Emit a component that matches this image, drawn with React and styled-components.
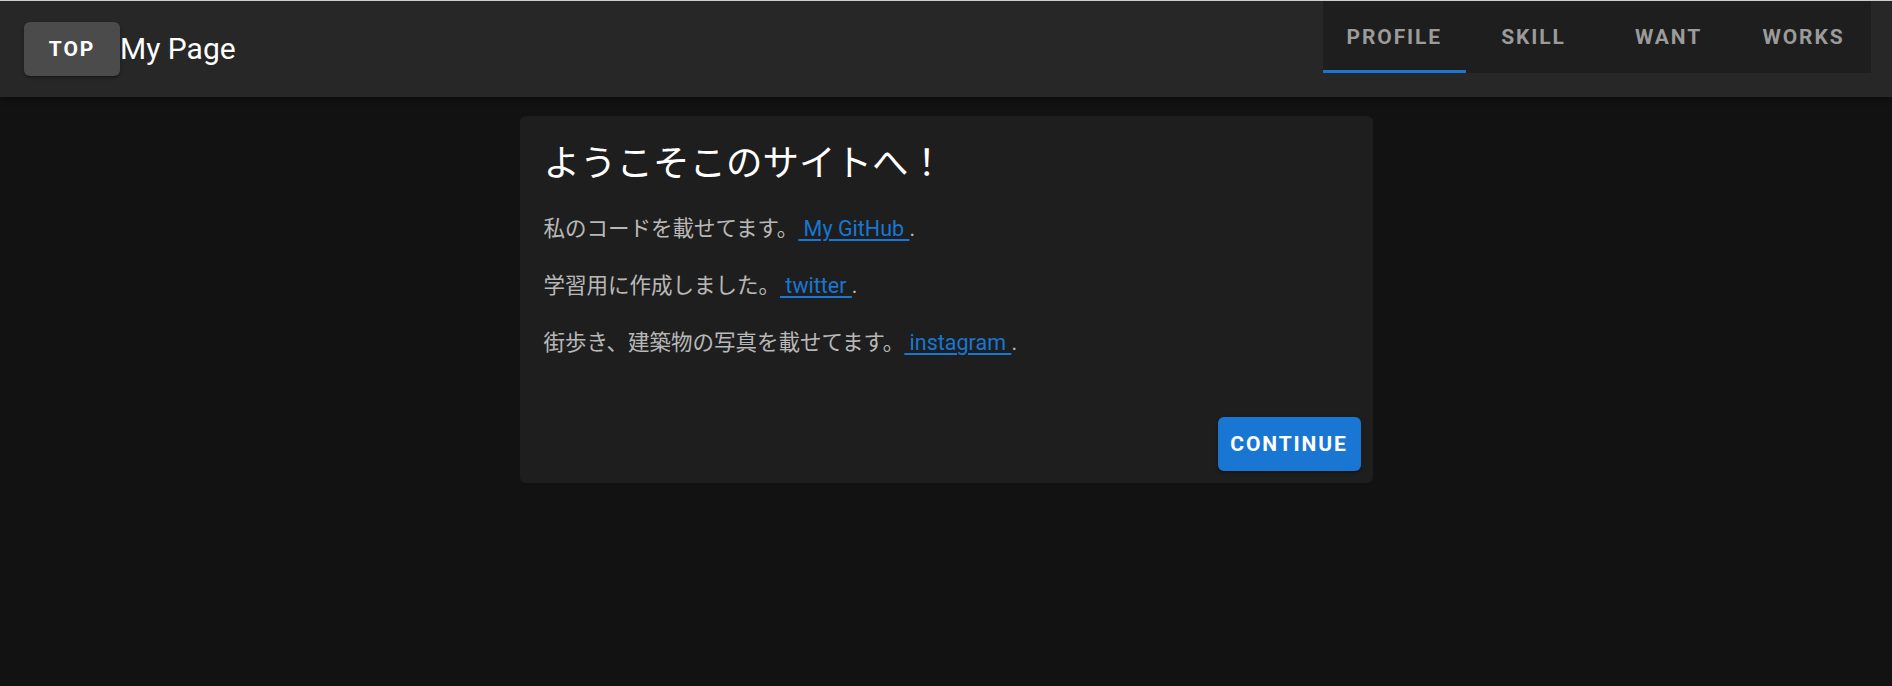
import React, { useState } from "react";
import styled, { createGlobalStyle } from "styled-components";

const GlobalStyle = createGlobalStyle`
    body {
        margin: 0;
        background-color: #121212;
        font-family: "Roboto", "Noto Sans CJK JP", sans-serif;
        color: #ffffff;
    }
`;

const Header = styled.header`
    display: flex;
    align-items: center;
    height: 96px;
    padding: 0 21px 0 24px;
    background-color: #272727;
    border-top: 1px solid #cfcfcf;
    box-shadow: 0 2px 4px -1px rgba(0, 0, 0, 0.2), 0 4px 5px 0 rgba(0, 0, 0, 0.14);
    position: relative;
    z-index: 1;
`;

const Brand = styled.div`
    display: flex;
    align-items: center;
    flex: 1;
`;

const TopButton = styled.button`
    min-width: 96px;
    height: 54px;
    padding: 0 24px;
    border: none;
    border-radius: 6px;
    background-color: #4b4b4b;
    color: #ffffff;
    font-family: "Roboto", sans-serif;
    font-size: 21px;
    font-weight: 700;
    letter-spacing: 1.875px;
    text-transform: uppercase;
    box-shadow: 0 3px 1px -2px rgba(0, 0, 0, 0.2), 0 2px 2px 0 rgba(0, 0, 0, 0.14), 0 1px 5px 0 rgba(0, 0, 0, 0.12);
    cursor: pointer;
`;

const Title = styled.div`
    font-size: 30px;
    line-height: 1;
    color: #ffffff;
`;

const Tabs = styled.nav`
    display: flex;
    align-self: flex-start;
    height: 72px;
    background-color: #1e1e1e;
`;

const Tab = styled.div`
    display: flex;
    align-items: center;
    justify-content: center;
    min-width: 135px;
    padding: 0 24px;
    box-sizing: border-box;
    position: relative;
    font-size: 21px;
    font-weight: 700;
    letter-spacing: 1.875px;
    text-transform: uppercase;
    color: #9b9b9b;
    cursor: pointer;

    &::after {
        content: "";
        position: absolute;
        left: 0;
        right: 0;
        bottom: 0;
        height: 3px;
        background-color: ${(props) => (props.active ? "#1976d2" : "transparent")};
    }
`;

const Main = styled.main`
    padding-top: 19px;
`;

const Card = styled.section`
    display: flex;
    flex-direction: column;
    width: 853px;
    height: 367px;
    margin: 0 auto;
    box-sizing: border-box;
    background-color: #1e1e1e;
    border-radius: 6px;
`;

const CardTitle = styled.h2`
    margin: 0;
    padding: 24px 24px 24px;
    font-size: 36.5px;
    font-weight: 400;
    line-height: 48px;
    color: #ffffff;
`;

const CardText = styled.div`
    padding: 0 24px;
    font-size: 21.5px;
    line-height: 33px;
    color: rgba(255, 255, 255, 0.7);

    p {
        margin: 0 0 24px;
    }
`;

const Link = styled.a`
    color: #1976d2;
    text-decoration: underline;
    text-underline-offset: 3px;
`;

const CardActions = styled.div`
    display: flex;
    justify-content: flex-end;
    margin-top: auto;
    padding: 12px;
`;

const PrimaryButton = styled.button`
    min-width: 143px;
    height: 54px;
    padding: 0 12px;
    border: none;
    border-radius: 6px;
    background-color: #1976d2;
    color: #ffffff;
    font-family: "Roboto", sans-serif;
    font-size: 21px;
    font-weight: 700;
    letter-spacing: 1.875px;
    text-transform: uppercase;
    box-shadow: 0 3px 1px -2px rgba(0, 0, 0, 0.2), 0 2px 2px 0 rgba(0, 0, 0, 0.14), 0 1px 5px 0 rgba(0, 0, 0, 0.12);
    cursor: pointer;
`;

const tabs = ["profile", "skill", "want", "works"];

const links = [
    { text: "私のコードを載せてます。", label: "My GitHub", href: "#github" },
    { text: "学習用に作成しました。", label: "twitter", href: "#twitter" },
    { text: "街歩き、建築物の写真を載せてます。", label: "instagram", href: "#instagram" },
];

const App = () => {
    const [active, setActive] = useState(0);

    return (
        <>
            <GlobalStyle />
            <Header>
                <Brand>
                    <TopButton>Top</TopButton>
                    <Title>My Page</Title>
                </Brand>
                <Tabs>
                    {tabs.map((tab, i) => (
                        <Tab key={tab} active={i === active} onClick={() => setActive(i)}>
                            {tab}
                        </Tab>
                    ))}
                </Tabs>
            </Header>
            <Main>
                <Card>
                    <CardTitle>ようこそこのサイトへ！</CardTitle>
                    <CardText>
                        {links.map((item) => (
                            <p key={item.href}>
                                {item.text}
                                <Link href={item.href}>{" " + item.label + " "}</Link>.
                            </p>
                        ))}
                    </CardText>
                    <CardActions>
                        <PrimaryButton>Continue</PrimaryButton>
                    </CardActions>
                </Card>
            </Main>
        </>
    );
};

export default App;
